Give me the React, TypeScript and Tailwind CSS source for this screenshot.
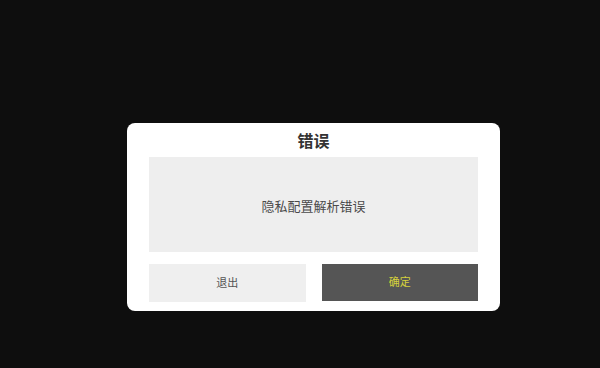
export default function App() {
  return (
    <div className="h-[368px] w-[600px] bg-[#0e0e0e] pt-[123px] pl-[127px] font-['Noto_Sans','Noto_Sans_CJK_SC',sans-serif]">
      <div className="flex w-[373px] flex-col rounded-[8px] bg-white px-[22px] pb-[9px]">
        <div className="flex h-[34px] items-center justify-center pt-[2px] text-[16px] font-bold text-[#333333]">
          错误
        </div>
        <div className="flex h-[95px] items-center justify-center bg-[#eeeeee] pt-[5px] text-[13px] text-[#4a4a4a]">
          隐私配置解析错误
        </div>
        <div className="mt-[12px] flex gap-[16px]">
          <button className="flex h-[38px] flex-1 items-center justify-center bg-[#efefef] text-[11px] text-[#555555]">
            退出
          </button>
          <button className="flex h-[37px] flex-1 items-center justify-center bg-[#555555] text-[11px] text-[#d6d23c]">
            确定
          </button>
        </div>
      </div>
    </div>
  );
}
